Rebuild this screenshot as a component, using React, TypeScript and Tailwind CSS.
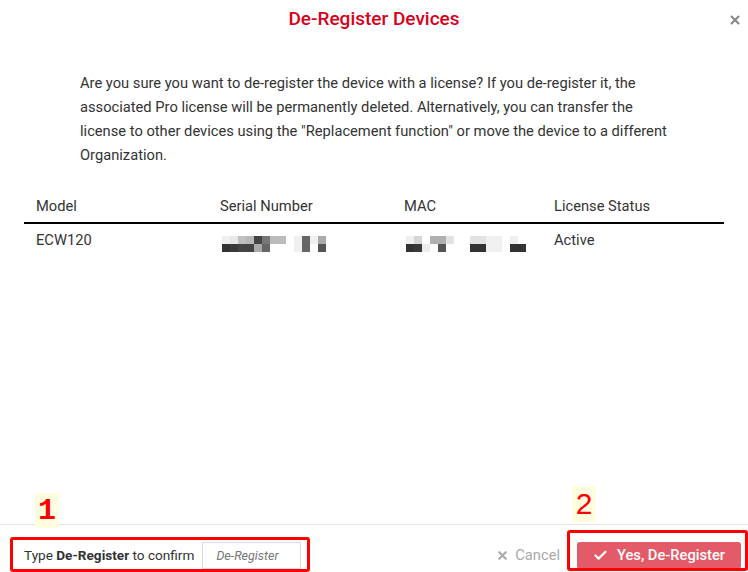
import { X, Check } from 'lucide-react';

const SERIAL_TOP = ['#f0f0f0', '#e8e8e8', '#c0c0c0', '#b8b8b8', '#444444', '#777777', '#bbbbbb', '#bbbbbb', '#ffffff', '#f0f0f0', '#666666', '#f0f0f0', '#aaaaaa'];
const SERIAL_BOTTOM = ['#333333', '#3a3a3a', '#444444', '#444444', '#aaaaaa', '#666666', '#ffffff', '#ffffff', '#ffffff', '#f0f0f0', '#666666', '#ffffff', '#555555'];
const MAC_TOP = ['#f0f0f0', '#d6d6d6', '#ffffff', '#b0b0b0', '#b0b0b0', '#e2e2e2', '#ffffff', '#ffffff', '#e2e2e2', '#e2e2e2', '#f0f0f0', '#f0f0f0', '#ffffff', '#f0f0f0', '#ffffff'];
const MAC_BOTTOM = ['#333333', '#3a3a3a', '#ececec', '#ffffff', '#555555', '#ffffff', '#ffffff', '#ffffff', '#333333', '#333333', '#f0f0f0', '#f0f0f0', '#ffffff', '#333333', '#333333'];

function Pixelated({ top, bottom }: { top: string[]; bottom: string[] }) {
  return (
    <div className="flex flex-col pt-[7px]">
      {[top, bottom].map((row, r) => (
        <div key={r} className="flex">
          {row.map((c, i) => (
            <div key={i} className="w-[8px] h-[8px]" style={{ backgroundColor: c }} />
          ))}
        </div>
      ))}
    </div>
  );
}

export default function App() {
  return (
    <div className="relative w-[748px] h-[572px] overflow-hidden bg-white text-[#333] font-['Roboto',sans-serif] flex flex-col">
      {/* Header */}
      <div className="relative h-[38px] flex items-center justify-center">
        <h2 className="text-[19px] font-medium text-[#d9001b]">De-Register Devices</h2>
        <button type="button" className="absolute right-[6px] top-[13px] text-[#888]">
          <X size={14} strokeWidth={3.5} />
        </button>
      </div>

      {/* Body */}
      <div className="flex-1">
        <p className="pl-20 pr-[70px] pt-[33px] text-[14.7px] leading-[24px] text-[#333]">
          Are you sure you want to de-register the device with a license? If you de-register it, the associated Pro license will be permanently deleted. Alternatively, you can transfer the license to other devices using the "Replacement function" or move the device to a different Organization.
        </p>

        <div className="mx-6 mt-[24px] text-[14.7px]">
          <div className="grid grid-cols-[184px_184px_150px_1fr] h-[33px] items-center border-b-2 border-black text-[#333]">
            <div className="px-3">Model</div>
            <div className="px-3">Serial Number</div>
            <div className="px-3">MAC</div>
            <div className="px-3">License Status</div>
          </div>
          <div className="grid grid-cols-[184px_184px_150px_1fr] h-[33px] items-center text-[#333]">
            <div className="px-3">ECW120</div>
            <div className="pl-[14px]">
              <Pixelated top={SERIAL_TOP} bottom={SERIAL_BOTTOM} />
            </div>
            <div className="pl-[14px]">
              <Pixelated top={MAC_TOP} bottom={MAC_BOTTOM} />
            </div>
            <div className="px-3">Active</div>
          </div>
        </div>
      </div>

      {/* Footer */}
      <div className="h-[48px] border-t border-[#e6e6e6] flex items-start pt-[17px] pl-6 pr-[7px] text-[13.6px]">
        <div className="flex items-center h-[27px]">
          <span className="text-[#333]">
            Type <span className="font-bold">De-Register</span> to confirm
          </span>
          <input
            placeholder="De-Register"
            className="ml-[8px] w-[99px] h-[27px] border border-[#dcdcdc] px-[13px] text-[12.5px] italic placeholder:text-[#777] outline-none"
          />
        </div>
        <div className="ml-auto flex items-center h-[27px]">
          <button type="button" className="flex items-center gap-[6px] text-[14.7px] text-[#aaa] mr-[17px]">
            <X size={13} strokeWidth={4} />
            Cancel
          </button>
          <button
            type="button"
            className="flex items-center justify-center gap-[9px] w-[164px] h-[27px] rounded-[3px] bg-[#e35a68] text-white text-[14.7px] font-medium"
          >
            <Check size={15} strokeWidth={3.5} />
            Yes, De-Register
          </button>
        </div>
      </div>

      {/* Annotations */}
      <div className="absolute left-[35px] top-[493px] w-[24px] h-[35px] bg-[#fffde0] flex items-center justify-center">
        <span className="text-[30px] font-bold text-[#ff0000] font-['Liberation_Mono',monospace] leading-none">1</span>
      </div>
      <div className="absolute left-[10px] top-[537px] w-[300px] h-[35px] border-[3px] border-[#ff0000] rounded-[3px]" />
      <div className="absolute left-[572px] top-[486px] w-[24px] h-[36px] bg-[#fffde0] flex items-center justify-center">
        <span className="text-[30px] text-[#ff0000] font-['Liberation_Sans',sans-serif] leading-none">2</span>
      </div>
      <div className="absolute left-[567px] top-[530px] w-[181px] h-[41px] border-[3px] border-[#ff0000] rounded-[3px]" />
    </div>
  );
}
